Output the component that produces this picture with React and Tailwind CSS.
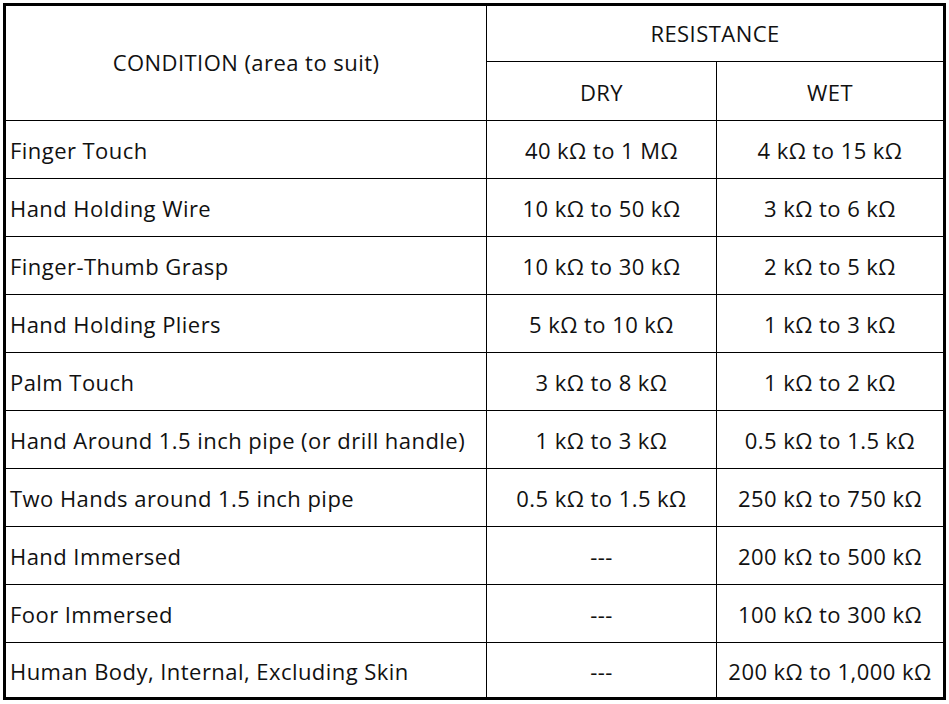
import React from "react";

const rows = [
  ["Finger Touch", "40 kΩ to 1 MΩ", "4 kΩ to 15 kΩ"],
  ["Hand Holding Wire", "10 kΩ to 50 kΩ", "3 kΩ to 6 kΩ"],
  ["Finger-Thumb Grasp", "10 kΩ to 30 kΩ", "2 kΩ to 5 kΩ"],
  ["Hand Holding Pliers", "5 kΩ to 10 kΩ", "1 kΩ to 3 kΩ"],
  ["Palm Touch", "3 kΩ to 8 kΩ", "1 kΩ to 2 kΩ"],
  ["Hand Around 1.5 inch pipe (or drill handle)", "1 kΩ to 3 kΩ", "0.5 kΩ to 1.5 kΩ"],
  ["Two Hands around 1.5 inch pipe", "0.5 kΩ to 1.5 kΩ", "250 kΩ to 750 kΩ"],
  ["Hand Immersed", "---", "200 kΩ to 500 kΩ"],
  ["Foor Immersed", "---", "100 kΩ to 300 kΩ"],
  ["Human Body, Internal, Excluding Skin", "---", "200 kΩ to 1,000 kΩ"],
];

export default function App() {
  return (
    <div className="w-[949px] h-[704px] bg-white p-[3px]" style={{ fontFamily: "'Open Sans', 'Noto Sans', sans-serif" }}>
      <div className="w-[943px] h-[697px] border-[3px] border-black bg-black">
        <div className="grid grid-cols-[480px_229px_226px] grid-rows-[55px_58px_repeat(9,57px)_54px] gap-px text-[22px] tracking-[0.45px] text-[#111]">
          <div className="row-span-2 bg-white flex items-center justify-center pb-[2px]">CONDITION (area to suit)</div>
          <div className="col-span-2 bg-white flex items-center justify-center">RESISTANCE</div>
          <div className="bg-white flex items-center justify-center pt-[2px]">DRY</div>
          <div className="bg-white flex items-center justify-center pt-[2px]">WET</div>
          {rows.map((r, i) => (
            <React.Fragment key={i}>
              <div className="bg-white flex items-center pl-[4px] pt-[2px]">{r[0]}</div>
              <div className="bg-white flex items-center justify-center pt-[2px]">{r[1]}</div>
              <div className="bg-white flex items-center justify-center pt-[2px]">{r[2]}</div>
            </React.Fragment>
          ))}
        </div>
      </div>
    </div>
  );
}
